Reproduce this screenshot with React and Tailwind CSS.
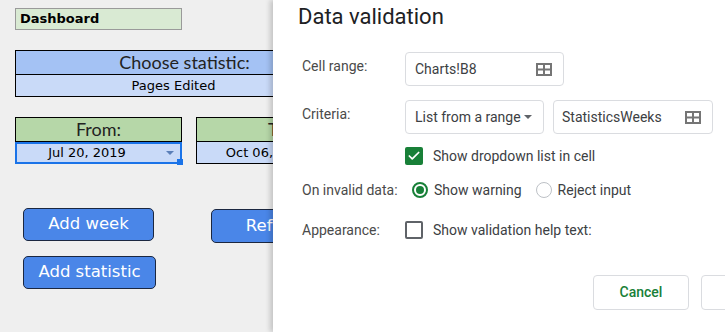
import { Check } from "lucide-react"

const sheetFont = { fontFamily: '"DejaVu Sans", Verdana, sans-serif' }
const roundFont = { fontFamily: 'Lato, "Noto Sans", sans-serif' }
const gFont = { fontFamily: 'Roboto, "Liberation Sans", sans-serif' }

const GridIcon = () => (
    <svg width="16" height="13" viewBox="0 0 16 13" className="shrink-0">
        <rect x="1" y="1" width="14" height="11" fill="none" stroke="#757575" strokeWidth="2" />
        <line x1="8" y1="1" x2="8" y2="12" stroke="#757575" strokeWidth="2" />
        <line x1="1" y1="6.5" x2="15" y2="6.5" stroke="#757575" strokeWidth="2" />
    </svg>
)

const SheetButton = ({ children, className }) => (
    <div
        className={`flex items-center justify-center rounded-[5px] border border-[#1b2740] bg-[#4a86e8] text-[16.5px] text-white ${className}`}
        style={sheetFont}
    >
        {children}
    </div>
)

const DateCell = ({ label, value, selected }) => (
    <div className="w-[167px]">
        <div
            className="flex h-[25px] items-center justify-center border border-black bg-[#b6d7a8] text-[18px] text-[#222]"
            style={roundFont}
        >
            {label}
        </div>
        <div
            className={`relative flex h-[22px] items-center justify-center bg-[#c9daf8] pr-[23px] text-[13px] text-black ${
                selected ? "border-2 border-[#1a73e8]" : "border border-t-0 border-black"
            }`}
            style={sheetFont}
        >
            {value}
            <span className="absolute right-[6px] top-[7px] h-0 w-0 border-x-[4px] border-t-[4px] border-x-transparent border-t-[#5b7fb8]" />
            {selected && <span className="absolute -bottom-[3px] -right-[3px] h-[6px] w-[6px] bg-[#1a73e8]" />}
        </div>
    </div>
)

const Row = ({ label, children, className = "" }) => (
    <div className={`flex items-start ${className}`}>
        <div className="w-[103px] shrink-0 whitespace-nowrap pt-[4px] text-[14px] leading-[20px] text-[#4a4a4a]">
            {label}
        </div>
        {children}
    </div>
)

export default function App() {
    return (
        <div className="flex h-[332px] w-[725px] overflow-hidden bg-[#efefef]">
            {/* spreadsheet behind the dialog */}
            <div className="h-full w-[273px] shrink-0 overflow-hidden pl-[15px] pt-[8px]">
                <div className="w-[700px]">
                    <div
                        className="h-[22px] w-[167px] border border-[#9a9a9a] bg-[#d9ead3] pl-[4px] text-[13px] font-bold leading-[20px] text-black"
                        style={sheetFont}
                    >
                        Dashboard
                    </div>

                    <div className="mt-[20px] w-[339px] border border-black">
                        <div
                            className="flex h-[24px] items-center justify-center border-b border-black bg-[#a4c2f4] text-[18px] text-[#222]"
                            style={roundFont}
                        >
                            Choose statistic:
                        </div>
                        <div
                            className="flex h-[21px] items-center justify-center bg-[#c9daf8] pr-[22px] text-[13px] text-black"
                            style={sheetFont}
                        >
                            Pages Edited
                        </div>
                    </div>

                    <div className="mt-[20px] flex gap-[14px]">
                        <DateCell label="From:" value="Jul 20, 2019" selected />
                        <DateCell label="To:" value="Oct 06, 2019" />
                    </div>

                    <div className="ml-[8px] mt-[44px] flex items-start">
                        <SheetButton className="h-[33px] w-[131px]">Add week</SheetButton>
                        <SheetButton className="ml-[57px] mt-[1px] h-[34px] w-[132px]">Refresh</SheetButton>
                    </div>
                    <SheetButton className="ml-[8px] mt-[13px] h-[33px] w-[133px]">Add statistic</SheetButton>
                </div>
            </div>

            {/* dialog */}
            <div
                className="relative h-full w-[540px] shrink-0 bg-white pl-[25px] pt-[3px] shadow-[-3px_0_5px_rgba(0,0,0,0.18)]"
                style={gFont}
            >
                <div className="text-[22px] leading-[28px] text-[#202124]">Data validation</div>

                <div className="pl-[4px]">
                    <Row label="Cell range:" className="mt-[21px]">
                        <div className="flex h-[34px] w-[159px] items-center justify-between rounded-[4px] border border-[#dadce0] pl-[9px] pr-[11px] text-[14px] text-[#3c4043]">
                            Charts!B8
                            <GridIcon />
                        </div>
                    </Row>

                    <Row label="Criteria:" className="mt-[14px]">
                        <div className="flex h-[34px] w-[139px] items-center justify-between rounded-[4px] border border-[#dadce0] pl-[9px] pr-[11px] text-[14px] text-[#3c4043]">
                            List from a range
                            <span className="h-0 w-0 border-x-[4px] border-t-[4px] border-x-transparent border-t-[#5f6368]" />
                        </div>
                        <div className="ml-[9px] flex h-[34px] w-[160px] items-center justify-between rounded-[4px] border border-[#dadce0] pl-[8px] pr-[11px] text-[14px] text-[#3c4043]">
                            StatisticsWeeks
                            <GridIcon />
                        </div>
                    </Row>

                    <div className="ml-[103px] mt-[12px] flex h-[20px] items-center text-[14px] text-[#3c4043]">
                        <span className="flex h-[18px] w-[18px] items-center justify-center rounded-[2px] bg-[#188038]">
                            <Check className="h-[14px] w-[14px] text-white" strokeWidth={3} />
                        </span>
                        <span className="ml-[10px]">Show dropdown list in cell</span>
                    </div>

                    <div className="mt-[14px] flex h-[20px] items-center text-[14px] text-[#3c4043]">
                        <span className="w-[103px] shrink-0 whitespace-nowrap text-[#4a4a4a]">On invalid data:</span>
                        <span className="ml-[7px] flex h-[16px] w-[16px] items-center justify-center rounded-full border-2 border-[#188038]">
                            <span className="h-[8px] w-[8px] rounded-full bg-[#188038]" />
                        </span>
                        <span className="ml-[6px]">Show warning</span>
                        <span className="ml-[14px] h-[16px] w-[16px] rounded-full border border-[#bdc1c6]" />
                        <span className="ml-[6px]">Reject input</span>
                    </div>

                    <div className="mt-[20px] flex h-[20px] items-center text-[14px] text-[#3c4043]">
                        <span className="w-[103px] shrink-0 text-[#4a4a4a]">Appearance:</span>
                        <span className="h-[18px] w-[18px] rounded-[2px] border-2 border-[#5f6368]" />
                        <span className="ml-[10px]">Show validation help text:</span>
                    </div>
                </div>

                <div className="ml-[295px] mt-[35px] flex gap-[12px]">
                    <div className="flex h-[35px] w-[96px] items-center justify-center rounded-[4px] border border-[#dadce0] text-[14px] font-medium text-[#188038]">
                        Cancel
                    </div>
                    <div className="flex h-[35px] w-[96px] items-center justify-center rounded-[4px] border border-[#dadce0] text-[14px] font-medium text-[#188038]">
                        Save
                    </div>
                </div>
            </div>
        </div>
    )
}
